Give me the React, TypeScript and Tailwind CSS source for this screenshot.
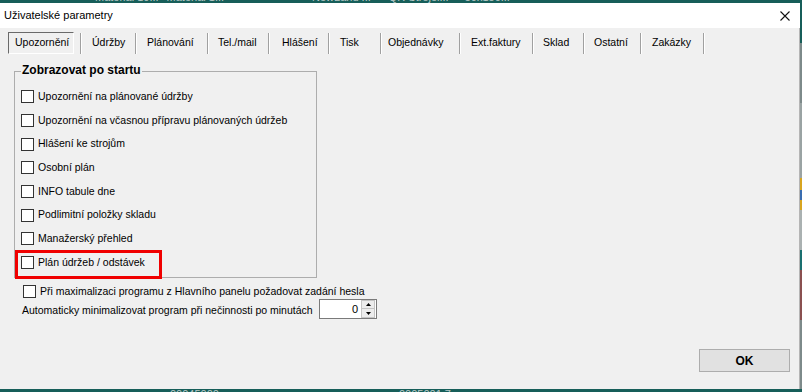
import React from "react";

const tabs: { label: string; w: number; pl: number }[] = [
  { label: "Údržby", w: 53, pl: 10 },
  { label: "Plánování", w: 70, pl: 10 },
  { label: "Tel./mail", w: 59, pl: 9 },
  { label: "Hlášení", w: 58, pl: 12 },
  { label: "Tisk", w: 50, pl: 10 },
  { label: "Objednávky", w: 77, pl: 6 },
  { label: "Ext.faktury", w: 71, pl: 10 },
  { label: "Sklad", w: 49, pl: 9 },
  { label: "Ostatní", w: 55, pl: 9 },
  { label: "Zakázky", w: 61, pl: 10 },
];

const items = [
  "Upozornění na plánované údržby",
  "Upozornění na včasnou přípravu plánovaných údržeb",
  "Hlášení ke strojům",
  "Osobní plán",
  "INFO tabule dne",
  "Podlimitní položky skladu",
  "Manažerský přehled",
  "Plán údržeb / odstávek",
];

function Sep() {
  return (
    <div className="flex h-[21px]">
      <div className="w-[1px] bg-[#a0a0a0]" />
      <div className="w-[1px] bg-[#ffffff]" />
    </div>
  );
}

function Box() {
  return <div className="w-[13px] h-[13px] shrink-0 border border-[#333333] bg-white" />;
}

export default function App() {
  return (
    <div className="w-[802px] h-[392px] overflow-hidden bg-[#175e59] flex flex-col font-['Liberation_Sans',Arial,sans-serif] text-[10.5px] text-black">
      {/* top desktop strip */}
      <div className="h-[3px] overflow-hidden flex text-[11px] text-[#b9c9c7] leading-[13px]">
        <div className="flex mt-[-9px] whitespace-nowrap">
          <span className="ml-[95px]">Material 10...</span>
          <span className="ml-[8px]">Material 1...</span>
          <span className="ml-[88px]">NewLand ...</span>
          <span className="ml-[18px]">QR Strojel...</span>
          <span className="ml-[16px]">50x150...</span>
        </div>
      </div>
      <div className="flex h-[386px]">
        {/* window */}
        <div className="w-[800px] flex flex-col">
          <div className="h-[25px] bg-white flex items-center justify-between pl-[4px] pr-[10px]">
            <span className="text-[11px] text-black">Uživatelské parametry</span>
            <svg width="10" height="10" viewBox="0 0 10 10" className="mt-[1px]">
              <path d="M0.5 0.5 L9.5 9.5 M9.5 0.5 L0.5 9.5" stroke="#111" strokeWidth="1.1" />
            </svg>
          </div>
          <div className="flex-1 bg-[#f0f0f0] flex flex-col border-r border-[#b5b5b5]">
            {/* tabs */}
            <div className="flex items-center h-[22px] mt-[4px] ml-[8px]">
              <div className="w-[66px] h-[22px] flex items-center pl-[6px] border-t border-l border-[#6a6a6a] border-r-white border-b-white border-r border-b">
                Upozornění
              </div>
              <div className="w-[6px]" />
              <Sep />
              {tabs.map((t) => (
                <React.Fragment key={t.label}>
                  <div className="h-[22px] flex items-center whitespace-nowrap" style={{ width: t.w, paddingLeft: t.pl }}>
                    {t.label}
                  </div>
                  <Sep />
                </React.Fragment>
              ))}
            </div>

            {/* group box */}
            <div className="relative ml-[14px] mt-[17px] w-[303px] h-[207px] border border-[#adadad] pt-[13px]">
              <span className="absolute left-[6px] top-[-9px] bg-[#f0f0f0] pl-[1px] pr-[1px] font-bold text-[12px] leading-[15px]">
                Zobrazovat po startu
              </span>
              {items.map((it, i) => (
                <div key={it} className="relative h-[23.7px] flex items-center pl-[6px] gap-[4px] whitespace-nowrap">
                  <Box />
                  <span>{it}</span>
                  {i === items.length - 1 && (
                    <div className="absolute left-0 top-[-1px] w-[147px] h-[29px] border-[3px] border-[#f00000]" />
                  )}
                </div>
              ))}
            </div>

            <div className="flex items-center ml-[23px] mt-[7px] h-[13px] gap-[4px] whitespace-nowrap">
              <Box />
              <span>Při maximalizaci programu z Hlavního panelu požadovat zadání hesla</span>
            </div>

            <div className="flex items-center ml-[22px] mt-[1px] h-[20px] whitespace-nowrap">
              <span className="w-[297px] pt-[3px]">Automaticky minimalizovat program při nečinnosti po minutách</span>
              <div className="w-[58px] h-[20px] border border-[#7a7a7a] bg-white flex items-center justify-end pr-[1px]">
                <span className="pr-[3px] pt-[1px] text-[11px]">0</span>
                <div className="flex flex-col w-[14px] h-[18px]">
                  <div className="h-[9px] bg-[#ececec] border border-[#c4c4c4] flex items-center justify-center">
                    <svg width="5" height="3" viewBox="0 0 5 3"><path d="M2.5 0 L5 3 L0 3 Z" fill="#000" /></svg>
                  </div>
                  <div className="h-[9px] bg-[#ececec] border border-[#c4c4c4] border-t-0 flex items-center justify-center">
                    <svg width="5" height="3" viewBox="0 0 5 3"><path d="M0 0 L5 0 L2.5 3 Z" fill="#000" /></svg>
                  </div>
                </div>
              </div>
            </div>

            <div className="flex justify-end mt-[30px] pr-[9px]">
              <div className="w-[91px] h-[23px] bg-[#e1e1e1] border border-[#adadad] flex items-center justify-center font-bold text-[12px]">
                OK
              </div>
            </div>
          </div>
        </div>
        {/* right desktop strip */}
        <div className="w-[2px] flex flex-col">
          <div className="h-[40px] bg-[#175e59]" />
          <div className="h-[60px] bg-[#7d8a8a]" />
          <div className="h-[75px] bg-[#9aa3a3]" />
          <div className="h-[12px] bg-[#d8a520]" />
          <div className="h-[10px] bg-[#3a6db0]" />
          <div className="h-[10px] bg-[#d8a520]" />
          <div className="h-[40px] bg-[#aab1b1]" />
          <div className="h-[20px] bg-[#1a7070]" />
          <div className="h-[50px] bg-[#8a5050]" />
          <div className="flex-1 bg-[#7d8a8a]" />
        </div>
      </div>
      {/* bottom desktop strip */}
      <div className="h-[3px] overflow-hidden flex text-[11px] text-[#b9c9c7] leading-[13px]">
        <div className="flex whitespace-nowrap mt-[-1px]">
          <span className="ml-[170px]">00045000</span>
          <span className="ml-[180px]">0005001.7</span>
        </div>
      </div>
    </div>
  );
}
